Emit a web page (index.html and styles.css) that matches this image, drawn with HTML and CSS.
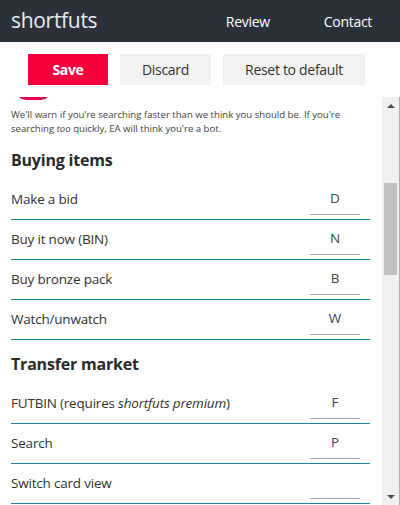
FILE: index.html
```html
<!DOCTYPE html>
<html lang="en">
<head>
<meta charset="utf-8">
<title>shortfuts</title>
<link rel="stylesheet" href="styles.css">
</head>
<body>
<header class="topbar">
  <div class="logo">shortfuts</div>
  <nav class="nav">
    <a class="nav-link">Review</a>
    <a class="nav-link">Contact</a>
  </nav>
</header>
<div class="toolbar">
  <button class="btn btn-primary">Save</button>
  <button class="btn">Discard</button>
  <button class="btn">Reset to default</button>
</div>
<div class="main">
  <div class="content">
    <div class="toggle"></div>
    <p class="note"><span class="note-line">We'll warn if you're searching faster than we think you should be. If you're</span><span class="note-line">searching <em>too</em> quickly, EA will think you're a bot.</span></p>
    <h2 class="section-title">Buying items</h2>
    <div class="row"><span class="label">Make a bid</span><span class="key">D</span></div>
    <div class="row"><span class="label">Buy it now (BIN)</span><span class="key">N</span></div>
    <div class="row"><span class="label">Buy bronze pack</span><span class="key">B</span></div>
    <div class="row"><span class="label">Watch/unwatch</span><span class="key">W</span></div>
    <h2 class="section-title">Transfer market</h2>
    <div class="row"><span class="label">FUTBIN (requires <em>shortfuts premium</em>)</span><span class="key">F</span></div>
    <div class="row"><span class="label">Search</span><span class="key">P</span></div>
    <div class="row"><span class="label">Switch card view</span><span class="key"></span></div>
  </div>
  <div class="scrollbar">
    <div class="arrow arrow-up"></div>
    <div class="track"><div class="thumb"></div></div>
    <div class="arrow arrow-down"></div>
  </div>
</div>
</body>
</html>
```
FILE: styles.css
```css
* { box-sizing: border-box; }
html, body { margin: 0; padding: 0; }
body {
  width: 400px;
  height: 505px;
  overflow: hidden;
  font-family: "Open Sans", "Noto Sans", sans-serif;
  color: #333;
  background: #fff;
}
.topbar {
  height: 42px;
  background: #2b3138;
  display: flex;
  align-items: center;
  justify-content: space-between;
  padding: 0 28px 0 11px;
}
.logo {
  color: #e4ebf2;
  font-size: 21px;
  letter-spacing: -0.3px;
  line-height: 1;
  margin-top: -1px;
}
.nav { display: flex; gap: 54px; }
.nav-link {
  color: #fff;
  font-size: 14px;
  letter-spacing: -0.3px;
}
.toolbar {
  height: 55px;
  display: flex;
  gap: 12px;
  padding: 12px 0 0 28px;
}
.btn {
  height: 31px;
  border: 0;
  background: #f2f2f2;
  color: #333;
  font-family: "Open Sans", sans-serif;
  font-size: 14px;
  letter-spacing: -0.3px;
  padding: 0 22px;
}
.btn-primary {
  background: #f5003d;
  color: #fff;
  font-weight: 700;
  width: 80px;
}
.main {
  height: 408px;
  display: flex;
}
.content {
  flex: 1;
  overflow: hidden;
  padding: 0 12px 0 11px;
}
.toggle {
  width: 35px;
  height: 20px;
  margin: -17px 0 0 5px;
  border-radius: 10px;
  background: #e8004a;
}
.note {
  margin: 8px 0 0;
  font-size: 9.6px;
  line-height: 14px;
  color: #444;
}
.note-line {
  display: block;
  white-space: nowrap;
}
.section-title {
  margin: 12px 0 8px;
  font-size: 16px;
  line-height: 24px;
  font-weight: 700;
  color: #2a2a2a;
  letter-spacing: -0.2px;
}
.row {
  height: 40px;
  display: flex;
  align-items: center;
  justify-content: space-between;
  border-bottom: 1px solid #2585a8;
}
.label {
  font-size: 13.5px;
  letter-spacing: -0.2px;
  color: #333;
  margin-top: -2px;
}
.key {
  width: 50px;
  height: 30px;
  margin: 0 10px -1px 0;
  border-bottom: 1px solid #a3abb3;
  text-align: center;
  line-height: 27px;
  font-size: 13.5px;
  color: #444;
}
.scrollbar {
  width: 18px;
  background: #f0f0f0;
  border-right: 1px solid #b0b0b0;
  display: flex;
  flex-direction: column;
}
.arrow {
  height: 17px;
  display: flex;
  align-items: center;
  justify-content: center;
}
.arrow::before {
  content: "";
  border-left: 4px solid transparent;
  border-right: 4px solid transparent;
}
.arrow-up::before { border-bottom: 4px solid #505050; }
.arrow-down::before { border-top: 4px solid #505050; }
.track {
  flex: 1;
  padding: 69px 2px 0 2px;
}
.thumb {
  height: 92px;
  background: #c1c1c1;
}
```
